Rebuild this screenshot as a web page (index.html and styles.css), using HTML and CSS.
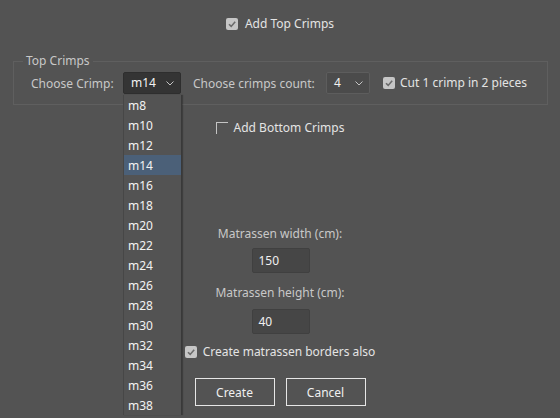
FILE: index.html
```
<!DOCTYPE html>
<html>
<head>
<meta charset="utf-8">
<link rel="stylesheet" href="styles.css">
</head>
<body>
<div class="dialog">
  <div class="check-row top-check">
    <span class="cb checked"><svg viewBox="0 0 12 12" width="12" height="12"><path d="M3 6.2 L5.2 8.4 L9.2 3.8" fill="none" stroke="#6b6b6b" stroke-width="1.6"/></svg></span>
    <span class="cb-label">Add Top Crimps</span>
  </div>

  <fieldset class="group">
    <legend>Top Crimps</legend>
    <div class="group-row">
      <span class="lbl lbl-crimp">Choose Crimp:</span>
      <div class="select select-dark">
        <span class="sel-val">m14</span>
        <svg class="chev" viewBox="0 0 8 5" width="8" height="5"><path d="M0.5 0.5 L4 4 L7.5 0.5" fill="none" stroke="#c4c4c4" stroke-width="1"/></svg>
        <ul class="droplist">
          <li>m8</li><li>m10</li><li>m12</li><li class="sel">m14</li>
          <li>m16</li><li>m18</li><li>m20</li><li>m22</li>
          <li>m24</li><li>m26</li><li>m28</li><li>m30</li>
          <li>m32</li><li>m34</li><li>m36</li><li>m38</li>
        </ul>
      </div>
      <span class="lbl lbl-count">Choose crimps count:</span>
      <div class="select select-light">
        <span class="sel-val">4</span>
        <svg class="chev" viewBox="0 0 8 5" width="8" height="5"><path d="M0.5 0.5 L4 4 L7.5 0.5" fill="none" stroke="#c4c4c4" stroke-width="1"/></svg>
      </div>
      <span class="cb checked cut-cb"><svg viewBox="0 0 12 12" width="12" height="12"><path d="M3 6.2 L5.2 8.4 L9.2 3.8" fill="none" stroke="#6b6b6b" stroke-width="1.6"/></svg></span>
      <span class="cb-label">Cut 1 crimp in 2 pieces</span>
    </div>
  </fieldset>

  <div class="check-row bottom-check">
    <span class="cb unchecked"></span>
    <span class="cb-label">Add Bottom Crimps</span>
  </div>

  <div class="field-label width-label">Matrassen width (cm):</div>
  <div class="input input-width">150</div>
  <div class="field-label height-label">Matrassen height (cm):</div>
  <div class="input input-height">40</div>

  <div class="check-row borders-check">
    <span class="cb checked"><svg viewBox="0 0 12 12" width="12" height="12"><path d="M3 6.2 L5.2 8.4 L9.2 3.8" fill="none" stroke="#6b6b6b" stroke-width="1.6"/></svg></span>
    <span class="cb-label">Create matrassen borders also</span>
  </div>

  <div class="buttons">
    <button class="btn">Create</button>
    <button class="btn">Cancel</button>
  </div>
</div>
</body>
</html>
```
FILE: styles.css
```
html, body {
  margin: 0;
  padding: 0;
  width: 560px;
  height: 418px;
  overflow: hidden;
  background: #535353;
}
body {
  font-family: "Noto Sans", "Open Sans", sans-serif;
  font-size: 12px;
  color: #d0d0d0;
}
.dialog {
  display: flex;
  flex-direction: column;
  align-items: center;
}
.check-row {
  display: flex;
  align-items: center;
  height: 14px;
  gap: 6px;
}
.cb-label {
  color: #e4e4e4;
  line-height: 14px;
  white-space: nowrap;
}
.cb {
  width: 12px;
  height: 12px;
  box-sizing: border-box;
  display: inline-flex;
  flex: none;
}
.cb.checked {
  background: #c6c6c6;
  border-radius: 2px;
}
.cb.unchecked {
  border-top: 1px solid #c4c4c4;
  border-left: 1px solid #c4c4c4;
}
.top-check {
  margin-top: 17px;
  margin-left: 0;
  gap: 7px;
}
.group {
  align-self: stretch;
  margin: 23px 12px 0 13px;
  border: 1px solid #5f5f5f;
  padding: 4px 17px 10px 17px;
  min-width: 0;
}
.group legend {
  padding: 0 3px;
  margin-left: -8px;
  line-height: 14px;
  color: #c8c8c8;
}
.group-row {
  display: flex;
  align-items: center;
  height: 22px;
}
.lbl {
  color: #c8c8c8;
  white-space: nowrap;
  flex: none;
}
.lbl-crimp { width: 92px; }
.lbl-count { width: 133px; }
.select {
  position: relative;
  box-sizing: border-box;
  height: 22px;
  display: flex;
  align-items: center;
  justify-content: space-between;
  padding: 0 6px 0 7px;
  border-radius: 2px;
  flex: none;
  color: #f2f2f2;
}
.select-dark {
  width: 58px;
  margin-right: 12px;
  background: #343434;
  border: 1px solid #2e2e2e;
}
.select-light {
  width: 44px;
  margin-right: 13px;
  background: #4b4b4b;
  border: 1px solid #5d5d5d;
}
.chev { display: block; }
.sel-val { line-height: 14px; }
.droplist {
  position: absolute;
  left: -1px;
  top: 22px;
  width: 59px;
  box-sizing: border-box;
  margin: 0;
  padding: 0;
  list-style: none;
  background: #535353;
  border-left: 1px solid #474747;
  border-right: 1px solid #393939;
  box-shadow: 1px 0 1px rgba(0,0,0,0.25);
  z-index: 5;
}
.droplist li {
  height: 19px;
  padding-top: 1px;
  line-height: 20px;
  padding-left: 4px;
  color: #f2f2f2;
}
.droplist li.sel {
  background: #4b6078;
}
.cut-cb { margin-right: 5px; }
.bottom-check {
  margin-top: 16px;
}
.field-label {
  line-height: 16px;
  color: #c8c8c8;
}
.width-label { margin-top: 91px; }
.height-label { margin-top: 12px; }
.input {
  box-sizing: border-box;
  width: 58px;
  height: 25px;
  padding-left: 6px;
  line-height: 23px;
  background: #464646;
  border: 1px solid #404040;
  border-radius: 2px;
  color: #f0f0f0;
  margin-left: 1px;
}
.input-width { margin-top: 6px; }
.input-height { margin-top: 8px; }
.borders-check { margin-top: 11px; }
.buttons {
  display: flex;
  gap: 11px;
  margin-top: 19px;
}
.btn {
  width: 80px;
  height: 28px;
  box-sizing: border-box;
  background: transparent;
  border: 1px solid #e6e6e6;
  border-radius: 0;
  color: #f0f0f0;
  font-family: "Noto Sans", "Open Sans", sans-serif;
  font-size: 12px;
  padding: 0;
}
```
